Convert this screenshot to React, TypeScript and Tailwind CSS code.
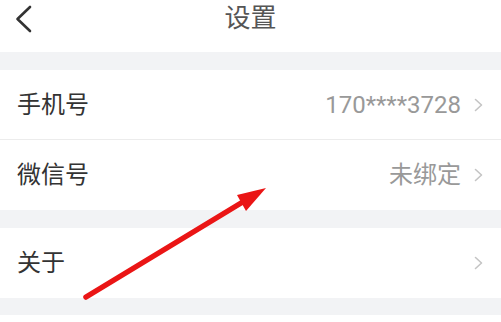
const FONT = "font-['Roboto','Noto_Sans_CJK_SC',sans-serif]";

function Chevron() {
  return (
    <svg width="9" height="14" viewBox="0 0 9 14" fill="none">
      <path d="M1.5 1.5 L7.5 7 L1.5 12.5" stroke="#c4c4c4" strokeWidth="1.6" strokeLinecap="round" strokeLinejoin="round" />
    </svg>
  );
}

function Row({ label, value, divider }: { label: string; value?: string; divider?: boolean }) {
  return (
    <div
      className={
        "flex h-[70px] items-center justify-between bg-white pl-[17px] pr-[18px] " +
        (divider ? "border-b border-[#ececec]" : "")
      }
    >
      <span className="text-[24px] leading-none text-[#333]">{label}</span>
      <div className="flex items-center gap-[13px]">
        {value && <span className="text-[24px] leading-none text-[#999]">{value}</span>}
        <Chevron />
      </div>
    </div>
  );
}

export default function App() {
  return (
    <div className={`relative h-[322px] w-[501px] overflow-hidden bg-white ${FONT}`}>
      {/* header */}
      <div className="grid h-[52px] grid-cols-[1fr_auto_1fr] items-start bg-white">
        <div className="pl-[14px] pt-[5px]">
          <svg width="20" height="28" viewBox="0 0 20 28" fill="none">
            <path d="M16 2 L3.5 14 L16 26" stroke="#333" strokeWidth="2.6" strokeLinecap="round" strokeLinejoin="round" />
          </svg>
        </div>
        <h1 className="pt-[5px] text-[26px] font-normal leading-none text-[#555]">设置</h1>
        <div />
      </div>

      <div className="h-[18px] bg-[#f2f3f5]" />
      <Row label="手机号" value="170****3728" divider />
      <Row label="微信号" value="未绑定" />
      <div className="h-[18px] bg-[#f2f3f5]" />
      <Row label="关于" />
      <div className="h-[17px] bg-[#f2f3f5]" />

      {/* annotation arrow */}
      <svg className="pointer-events-none absolute inset-0" width="501" height="322" viewBox="0 0 501 322">
        <line x1="86" y1="297" x2="246" y2="200" stroke="#ea1515" strokeWidth="5.5" strokeLinecap="round" />
        <polygon points="266,188 237,195 246,211" fill="#ea1515" />
      </svg>
    </div>
  );
}
